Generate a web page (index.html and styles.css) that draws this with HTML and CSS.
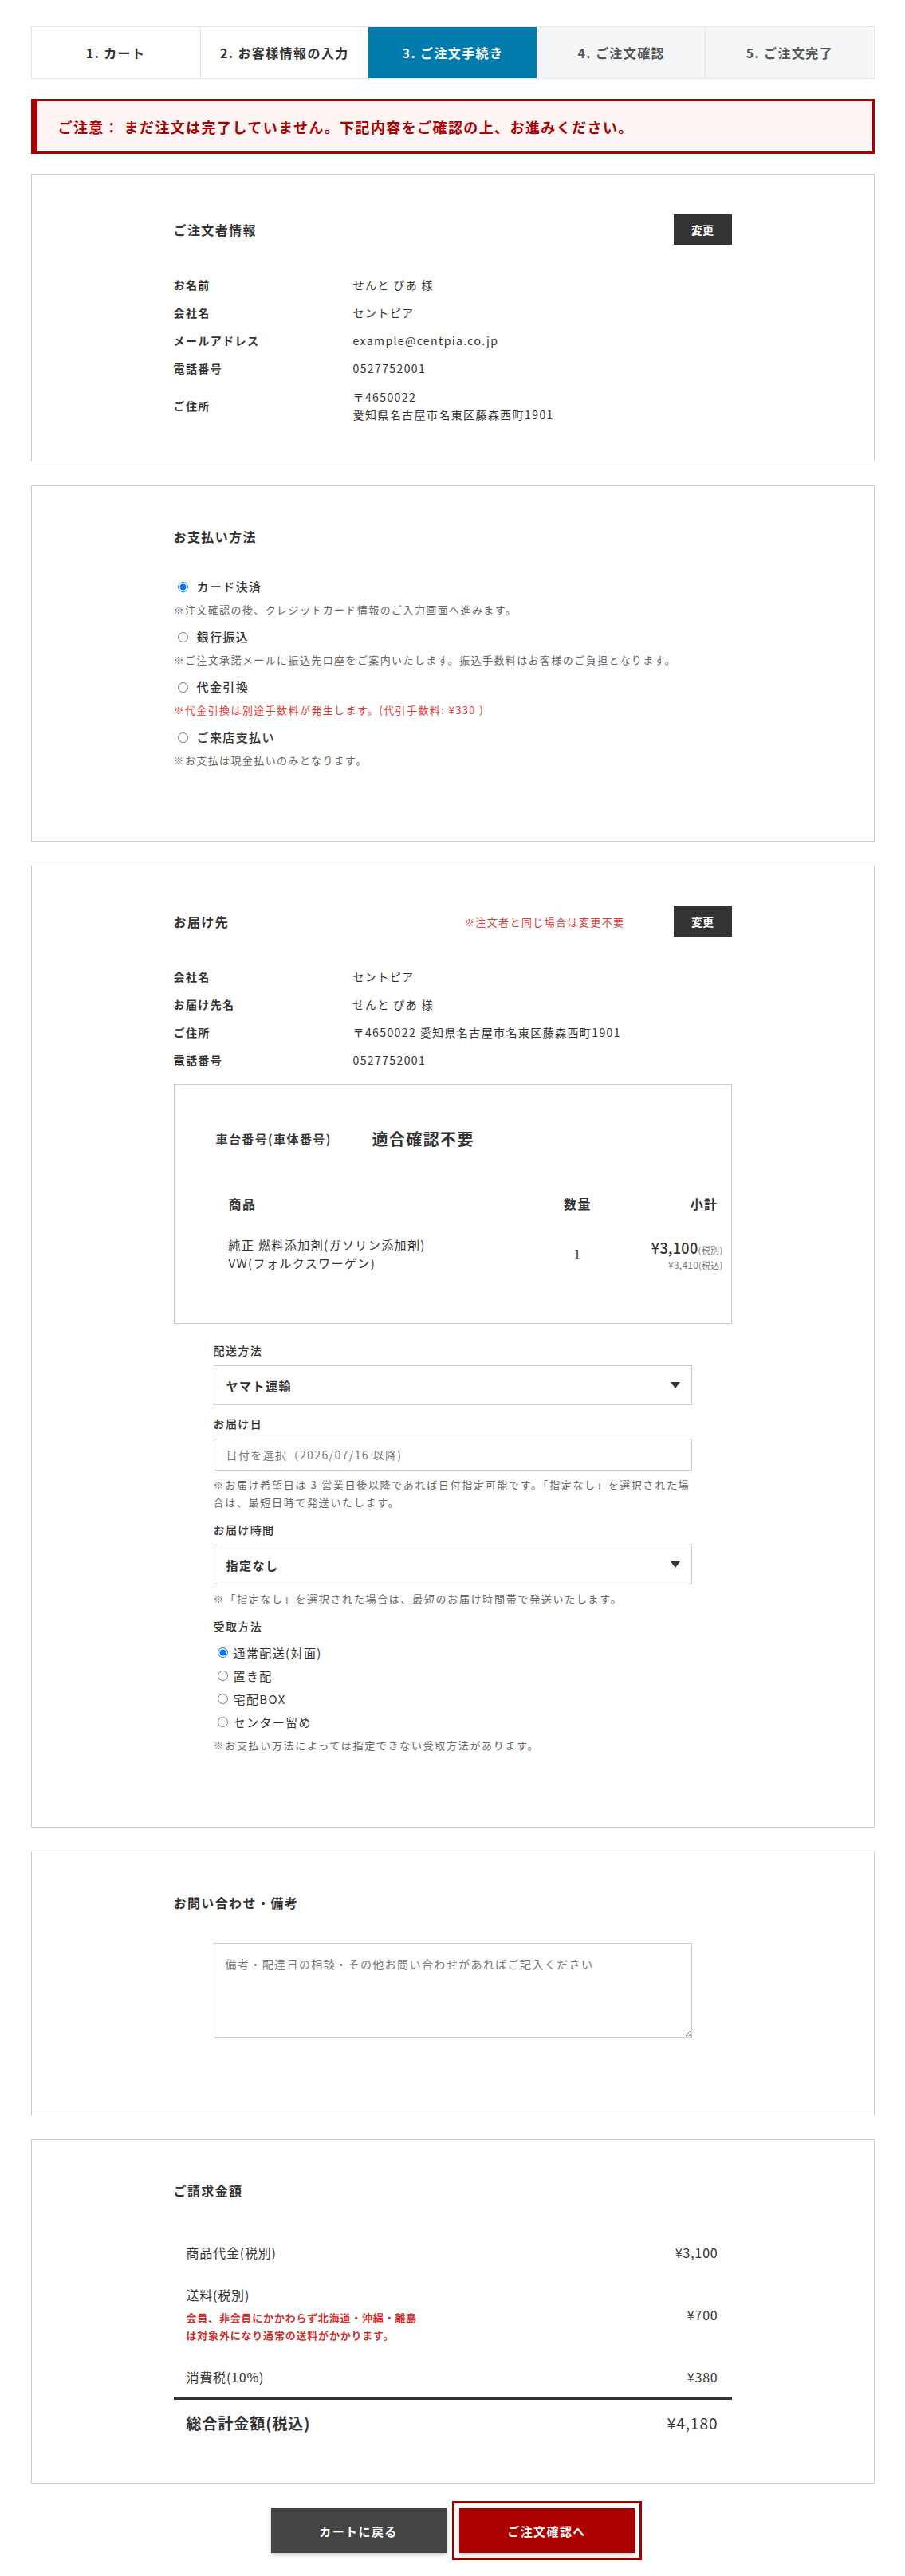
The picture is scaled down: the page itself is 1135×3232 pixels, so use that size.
FILE: index.html
```html
<!DOCTYPE html>
<html lang="ja">
<head>
  <meta charset="UTF-8">
  <title>ご注文手続き</title>
  <link rel="stylesheet" href="styles.css">
</head>
<body>
  <div class="page">
    <ol class="steps">
      <li class="step">1. カート</li>
      <li class="step">2. お客様情報の入力</li>
      <li class="step is-active">3. ご注文手続き</li>
      <li class="step is-todo">4. ご注文確認</li>
      <li class="step is-todo">5. ご注文完了</li>
    </ol>

    <div class="notice">ご注意： まだ注文は完了していません。下記内容をご確認の上、お進みください。</div>

    <!-- 注文者 -->
    <section class="panel panel--orderer">
      <div class="panel-inner">
        <div class="panel-head">
          <h2 class="panel-title">ご注文者情報</h2>
          <a href="#" class="btn-edit">変更</a>
        </div>
        <dl class="info-list">
          <div class="info-row"><dt>お名前</dt><dd>せんと ぴあ 様</dd></div>
          <div class="info-row"><dt>会社名</dt><dd>セントピア</dd></div>
          <div class="info-row"><dt>メールアドレス</dt><dd>example@centpia.co.jp</dd></div>
          <div class="info-row"><dt>電話番号</dt><dd>0527752001</dd></div>
          <div class="info-row"><dt>ご住所</dt><dd class="address">〒4650022<br>愛知県名古屋市名東区藤森西町1901</dd></div>
        </dl>
      </div>
    </section>

    <!-- 支払い方法 -->
    <section class="panel">
      <div class="panel-inner">
        <div class="panel-head">
          <h2 class="panel-title">お支払い方法</h2>
        </div>
        <div class="pay-list">
          <div class="pay-option">
            <label><input type="radio" name="payment" checked>カード決済</label>
            <p class="pay-note">※注文確認の後、クレジットカード情報のご入力画面へ進みます。</p>
          </div>
          <div class="pay-option">
            <label><input type="radio" name="payment">銀行振込</label>
            <p class="pay-note">※ご注文承諾メールに振込先口座をご案内いたします。振込手数料はお客様のご負担となります。</p>
          </div>
          <div class="pay-option">
            <label><input type="radio" name="payment">代金引換</label>
            <p class="pay-note is-warn">※代金引換は別途手数料が発生します。(代引手数料: ¥330 )</p>
          </div>
          <div class="pay-option">
            <label><input type="radio" name="payment">ご来店支払い</label>
            <p class="pay-note">※お支払は現金払いのみとなります。</p>
          </div>
        </div>
      </div>
    </section>

    <!-- お届け先 -->
    <section class="panel panel--delivery">
      <div class="panel-inner">
        <div class="panel-head">
          <h2 class="panel-title">お届け先</h2>
          <span class="head-note">※注文者と同じ場合は変更不要</span>
          <a href="#" class="btn-edit">変更</a>
        </div>
        <dl class="info-list">
          <div class="info-row"><dt>会社名</dt><dd>セントピア</dd></div>
          <div class="info-row"><dt>お届け先名</dt><dd>せんと ぴあ 様</dd></div>
          <div class="info-row"><dt>ご住所</dt><dd>〒4650022 愛知県名古屋市名東区藤森西町1901</dd></div>
          <div class="info-row"><dt>電話番号</dt><dd>0527752001</dd></div>
        </dl>

        <div class="product-box">
          <div class="vehicle">
            <span class="vehicle-label">車台番号(車体番号)</span>
            <span class="vehicle-value">適合確認不要</span>
          </div>
          <div class="item-table">
            <div class="item-head">
              <span>商品</span>
              <span class="col-qty">数量</span>
              <span class="col-price">小計</span>
            </div>
            <div class="item-row">
              <div class="item-name">純正 燃料添加剤(ガソリン添加剤)<br>VW(フォルクスワーゲン)</div>
              <div class="col-qty">1</div>
              <div class="col-price">
                <div class="price-main">¥3,100<small>(税別)</small></div>
                <div class="price-sub">¥3,410<small>(税込)</small></div>
              </div>
            </div>
          </div>
        </div>

        <div class="delivery-form">
          <div class="field">
            <label class="field-label">配送方法</label>
            <div class="select-wrap">
              <select class="select">
                <option>ヤマト運輸</option>
              </select>
            </div>
          </div>
          <div class="field">
            <label class="field-label">お届け日</label>
            <input type="text" class="text-input" placeholder="日付を選択（2026/07/16 以降)">
            <p class="help">※お届け希望日は 3 営業日後以降であれば日付指定可能です。「指定なし」を選択された場合は、最短日時で発送いたします。</p>
          </div>
          <div class="field">
            <label class="field-label">お届け時間</label>
            <div class="select-wrap">
              <select class="select">
                <option>指定なし</option>
              </select>
            </div>
            <p class="help">※「指定なし」を選択された場合は、最短のお届け時間帯で発送いたします。</p>
          </div>
          <div class="field">
            <span class="field-label">受取方法</span>
            <div class="receive-list">
              <label><input type="radio" name="receive" checked>通常配送(対面)</label>
              <label><input type="radio" name="receive">置き配</label>
              <label><input type="radio" name="receive">宅配BOX</label>
              <label><input type="radio" name="receive">センター留め</label>
            </div>
            <p class="help help--tight">※お支払い方法によっては指定できない受取方法があります。</p>
          </div>
        </div>
      </div>
    </section>

    <!-- 備考 -->
    <section class="panel panel--memo">
      <div class="panel-inner">
        <div class="panel-head">
          <h2 class="panel-title">お問い合わせ・備考</h2>
        </div>
        <textarea class="memo" placeholder="備考・配達日の相談・その他お問い合わせがあればご記入ください"></textarea>
      </div>
    </section>

    <!-- 請求金額 -->
    <section class="panel panel--bill">
      <div class="panel-inner">
        <div class="panel-head">
          <h2 class="panel-title">ご請求金額</h2>
        </div>
        <div class="bill">
          <div class="bill-row">
            <span>商品代金(税別)</span>
            <span>¥3,100</span>
          </div>
          <div class="bill-row">
            <div>
              <span>送料(税別)</span>
              <p class="bill-note">会員、非会員にかかわらず北海道・沖縄・離島<br>は対象外になり通常の送料がかかります。</p>
            </div>
            <span>¥700</span>
          </div>
          <div class="bill-row">
            <span>消費税(10%)</span>
            <span>¥380</span>
          </div>
          <div class="bill-row bill-total">
            <span class="bill-total-label">総合計金額(税込)</span>
            <span>¥4,180</span>
          </div>
        </div>
      </div>
    </section>

    <div class="actions">
      <a href="#" class="btn btn-back">カートに戻る</a>
      <a href="#" class="btn btn-next">ご注文確認へ</a>
    </div>
  </div>
</body>
</html>
```

FILE: styles.css
```css
* { box-sizing: border-box; }
body {
  margin: 0;
  font-family: "Noto Sans CJK JP", "Noto Sans", sans-serif;
  font-size: 14px;
  letter-spacing: .1em;
  color: #333;
  background: #fff;
}
p { margin: 0; }
a { text-decoration: none; }

.page {
  width: 1058px;
  margin: 0 auto;
  padding: 33px 0 26px;
}

/* ステップ */
.steps {
  display: grid;
  grid-template-columns: repeat(5, 1fr);
  height: 66px;
  margin: 0;
  padding: 0;
  list-style: none;
  border: 1px solid #e6e6e6;
}
.step {
  display: flex;
  align-items: center;
  justify-content: center;
  font-size: 16px;
  font-weight: bold;
  color: #333;
  border-left: 1px solid #e6e6e6;
}
.step:first-child { border-left: 0; }
.step.is-active { background: #007bac; color: #fff; border-left-color: #007bac; }
.step.is-todo { background: #f4f5f7; color: #555; }

.notice {
  display: flex;
  align-items: center;
  height: 69px;
  margin-top: 25px;
  padding-left: 26px;
  border: 3px solid #a00;
  border-left-width: 8px;
  background: #fff4f4;
  color: #a00;
  font-size: 18px;
  font-weight: bold;
}

/* パネル */
.panel {
  margin-top: 30px;
  padding: 50px 0 91px;
  border: 1px solid #ccc;
}
.panel--orderer { margin-top: 25px; padding-bottom: 40px; }
.panel--delivery { padding-bottom: 91px; }
.panel--memo { padding-bottom: 96px; }
.panel--bill { padding-bottom: 46px; }
.panel-inner {
  width: 700px;
  margin: 0 auto;
}
.panel-head {
  display: flex;
  align-items: center;
}
.panel-title {
  margin: 0;
  font-size: 16px;
  line-height: 26px;
  font-weight: bold;
}
.head-note {
  margin-left: auto;
  margin-right: 61px;
  font-size: 13px;
  color: #e03c3c;
}
.btn-edit {
  display: flex;
  align-items: center;
  justify-content: center;
  width: 73px;
  height: 38px;
  margin-left: auto;
  background: #333;
  color: #fff;
  font-size: 14px;
  font-weight: bold;
  letter-spacing: 0;
}
.head-note + .btn-edit { margin-left: 0; }

.info-list { margin: 33px 0 0; }
.info-row {
  display: flex;
  align-items: center;
  padding: 7px 0;
  line-height: 21px;
}
.info-row dt { width: 225px; font-weight: bold; }
.info-row dd { margin: 0; }
.info-row .address { line-height: 22px; }

/* 支払い方法 */
.pay-list { margin-top: 38px; }
.pay-option + .pay-option { margin-top: 12px; }
.pay-option label {
  display: flex;
  align-items: center;
  font-size: 15px;
  line-height: 24px;
  font-weight: 500;
}
.pay-option input { width: 13px; height: 13px; margin: 0 11px 0 5px; }
.pay-note {
  margin-top: 7px;
  font-size: 13px;
  line-height: 20px;
  color: #666;
}
.pay-note.is-warn { color: #e53935; }

/* 商品 */
.product-box {
  margin-top: 12px;
  padding: 51px 10px 44px 52px;
  border: 1px solid #ccc;
}
.vehicle {
  display: flex;
  align-items: center;
  height: 32px;
}
.vehicle-label { width: 196px; font-size: 15px; font-weight: bold; }
.vehicle-value { font-size: 20px; font-weight: bold; }
.item-table { margin-top: 46px; padding-left: 16px; }
.item-head, .item-row {
  display: grid;
  grid-template-columns: 1fr 100px 132px;
  align-items: center;
}
.item-head {
  height: 40px;
  font-size: 16px;
  font-weight: bold;
}
.item-head .col-price { padding-right: 6px; }
.item-row { padding: 20px 0; }
.item-name { font-size: 15px; line-height: 23px; }
.col-qty { text-align: center; font-size: 16px; }
.col-price { text-align: right; }
.price-main { font-size: 18px; font-weight: 500; letter-spacing: .02em; }
.price-main small { font-size: 11px; color: #777; font-weight: normal; }
.price-sub { font-size: 12px; color: #777; letter-spacing: .02em; }
.price-sub small { font-size: 11px; }

/* 配送フォーム */
.delivery-form { margin: 23px 50px 0; }
.field + .field { margin-top: 13px; }
.field-label {
  display: block;
  margin-bottom: 9px;
  font-size: 14px;
  line-height: 20px;
  font-weight: 500;
}
.select-wrap { position: relative; }
.select-wrap::after {
  content: "";
  position: absolute;
  right: 15px;
  top: 21px;
  border-left: 6px solid transparent;
  border-right: 6px solid transparent;
  border-top: 8px solid #333;
  pointer-events: none;
}
.select {
  display: block;
  width: 100%;
  height: 50px;
  padding: 0 15px;
  border: 1px solid #ccc;
  border-radius: 0;
  background: #fff;
  color: #333;
  font-family: inherit;
  font-size: 15px;
  font-weight: bold;
  letter-spacing: .1em;
  appearance: none;
  -webkit-appearance: none;
}
.text-input {
  display: block;
  width: 100%;
  height: 40px;
  padding: 0 15px;
  border: 1px solid #ccc;
  border-radius: 0;
  font-family: inherit;
  font-size: 14px;
  letter-spacing: .1em;
}
.text-input::placeholder { color: #777; }
.help {
  margin-top: 7px;
  font-size: 13px;
  line-height: 22px;
  letter-spacing: .13em;
  color: #666;
}
.help--tight { margin-top: 4px; }
.receive-list label {
  display: flex;
  align-items: center;
  height: 29px;
  font-size: 15px;
}
.receive-list input { width: 13px; height: 13px; margin: 0 7px 0 5px; }

/* 備考 */
.memo {
  display: block;
  width: 600px;
  height: 119px;
  margin: 38px auto 0;
  padding: 14px;
  border: 1px solid #ccc;
  border-radius: 0;
  font-family: inherit;
  font-size: 14px;
  line-height: 22px;
  letter-spacing: .1em;
}
.memo::placeholder { color: #777; }

/* 請求金額 */
.bill { margin-top: 38px; }
.bill-row {
  display: flex;
  align-items: center;
  justify-content: space-between;
  padding: 14.5px 17px 14.5px 16px;
  font-size: 16px;
  line-height: 24px;
  letter-spacing: .05em;
}
.bill-note {
  margin-top: 6px;
  font-size: 13px;
  line-height: 22px;
  font-weight: bold;
  color: #d32f2f;
}
.bill-total {
  padding-top: 17px;
  padding-bottom: 17px;
  border-top: 3px solid #333;
  font-size: 19px;
}
.bill-total-label { font-weight: bold; }

/* ボタン */
.actions {
  display: flex;
  justify-content: center;
  gap: 16px;
  margin-top: 31px;
}
.btn {
  display: flex;
  align-items: center;
  justify-content: center;
  width: 220px;
  height: 56px;
  color: #fff;
  font-size: 15px;
  font-weight: bold;
  box-shadow: 0 2px 6px rgba(0,0,0,0.25);
}
.btn-back { background: #444; }
.btn-next {
  background: #a00;
  outline: 3px solid #900;
  outline-offset: 6px;
}
```
